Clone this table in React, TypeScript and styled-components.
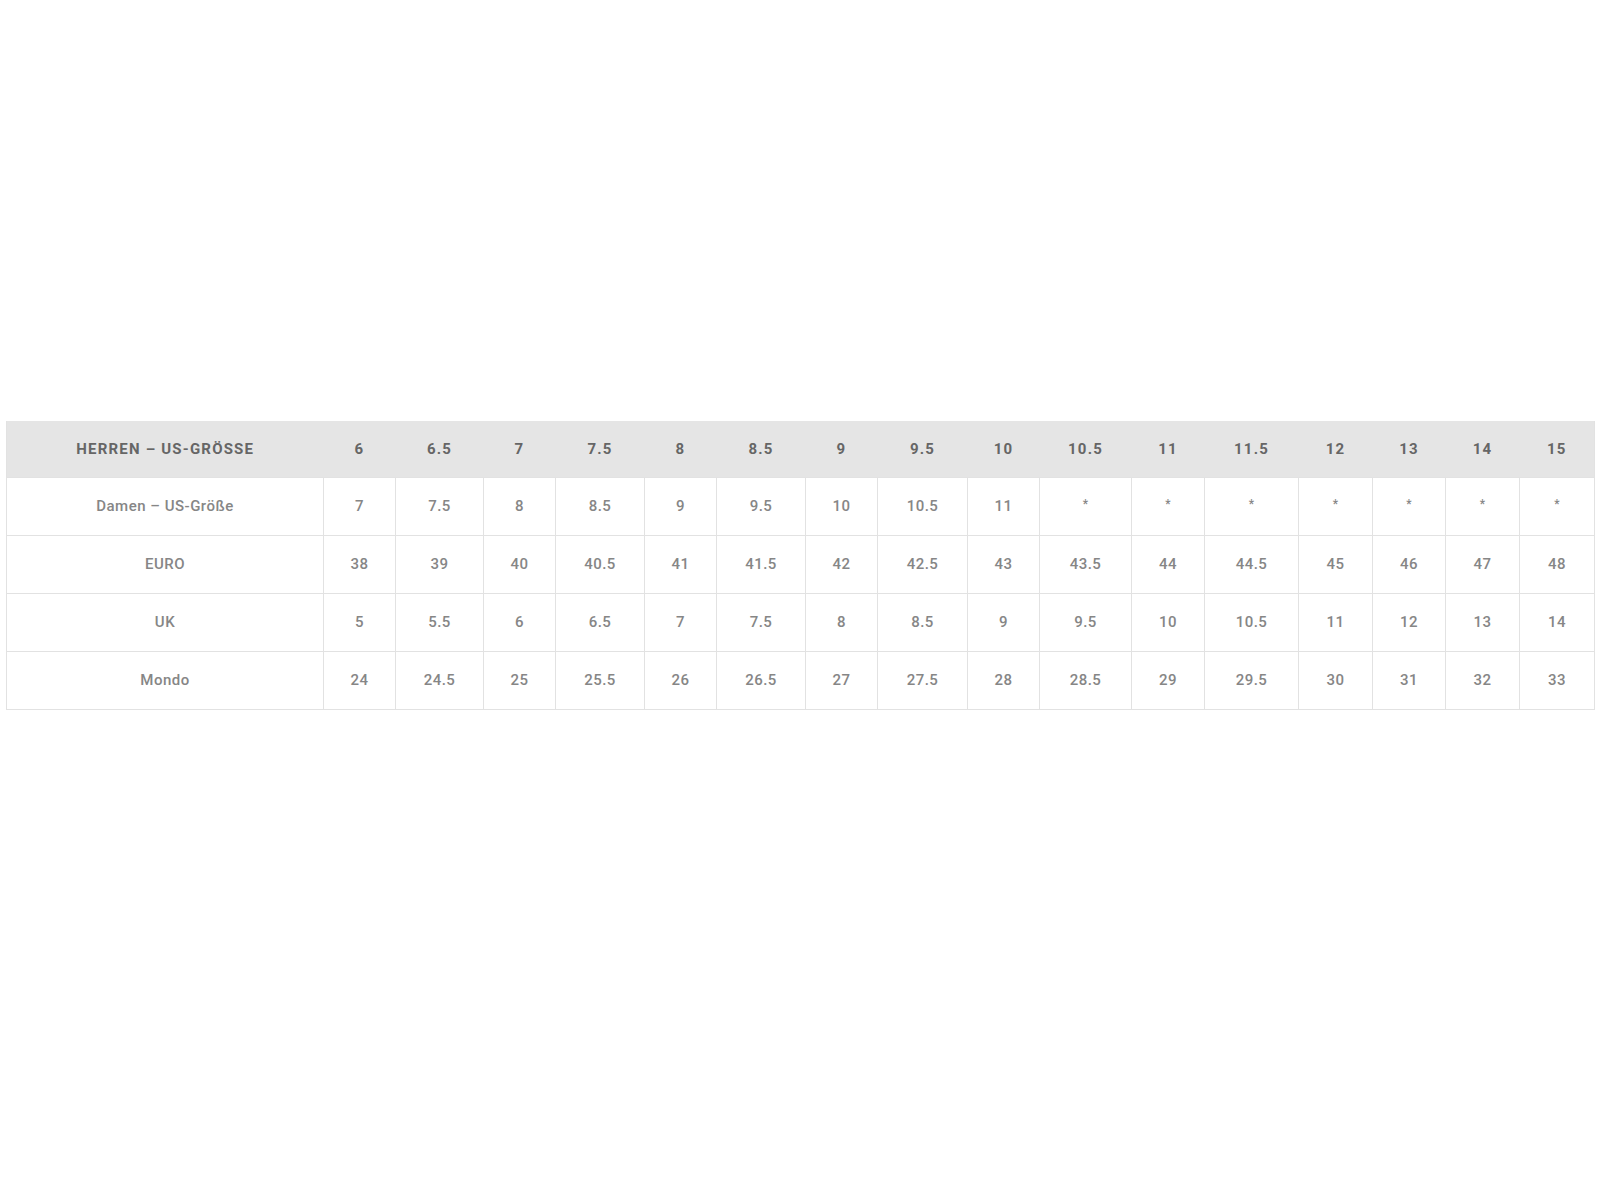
import React from 'react';
import styled, { createGlobalStyle } from 'styled-components';

const GlobalStyle = createGlobalStyle`
  html, body {
    margin: 0;
    padding: 0;
    background: #ffffff;
  }
  body {
    font-family: Roboto, "Liberation Sans", sans-serif;
  }
`;

const Page = styled.div`
  width: 1600px;
  height: 1200px;
  box-sizing: border-box;
  padding: 421px 6px 0 6px;
`;

const SizeTable = styled.table`
  width: 1588px;
  border-collapse: collapse;
  table-layout: fixed;
  border: 1px solid #e2e2e2;
  border-top: none;
`;

const HeadRow = styled.tr`
  background: #e5e5e5;
  height: 56px;
`;

const HeadCell = styled.th`
  padding: 0;
  font-weight: 700;
  font-size: 15px;
  letter-spacing: 1.2px;
  color: #666666;
  text-align: center;
  vertical-align: middle;
`;

const BodyRow = styled.tr`
  height: 58px;
  border-top: 1px solid #e2e2e2;
`;

const Cell = styled.td<{ $label?: boolean }>`
  padding: 0;
  font-size: 15px;
  font-weight: 500;
  letter-spacing: ${(p) => (p.$label ? '0.5px' : '0.4px')};
  color: #868686;
  text-align: center;
  vertical-align: middle;
  border-left: 1px solid #e2e2e2;
`;

const Star = styled.span`
  display: inline-block;
  font-size: 12px;
  transform: translateY(-3px);
`;

const widths = [317, 72, 88, 72, 89, 72, 89, 72, 90, 72, 92, 73, 94, 74, 73, 74, 75];

const header = ['HERREN – US-GRÖSSE', '6', '6.5', '7', '7.5', '8', '8.5', '9', '9.5', '10', '10.5', '11', '11.5', '12', '13', '14', '15'];

const rows: string[][] = [
  ['Damen – US-Größe', '7', '7.5', '8', '8.5', '9', '9.5', '10', '10.5', '11', '*', '*', '*', '*', '*', '*', '*'],
  ['EURO', '38', '39', '40', '40.5', '41', '41.5', '42', '42.5', '43', '43.5', '44', '44.5', '45', '46', '47', '48'],
  ['UK', '5', '5.5', '6', '6.5', '7', '7.5', '8', '8.5', '9', '9.5', '10', '10.5', '11', '12', '13', '14'],
  ['Mondo', '24', '24.5', '25', '25.5', '26', '26.5', '27', '27.5', '28', '28.5', '29', '29.5', '30', '31', '32', '33'],
];

function App() {
  return (
    <Page>
      <GlobalStyle />
      <SizeTable>
        <colgroup>
          {widths.map((w, i) => (
            <col key={i} style={{ width: w }} />
          ))}
        </colgroup>
        <thead>
          <HeadRow>
            {header.map((h, i) => (
              <HeadCell key={i}>{h}</HeadCell>
            ))}
          </HeadRow>
        </thead>
        <tbody>
          {rows.map((r, ri) => (
            <BodyRow key={ri}>
              {r.map((c, ci) => (
                <Cell key={ci} $label={ci === 0}>
                  {c === '*' ? <Star>*</Star> : c}
                </Cell>
              ))}
            </BodyRow>
          ))}
        </tbody>
      </SizeTable>
    </Page>
  );
}

export default App;
